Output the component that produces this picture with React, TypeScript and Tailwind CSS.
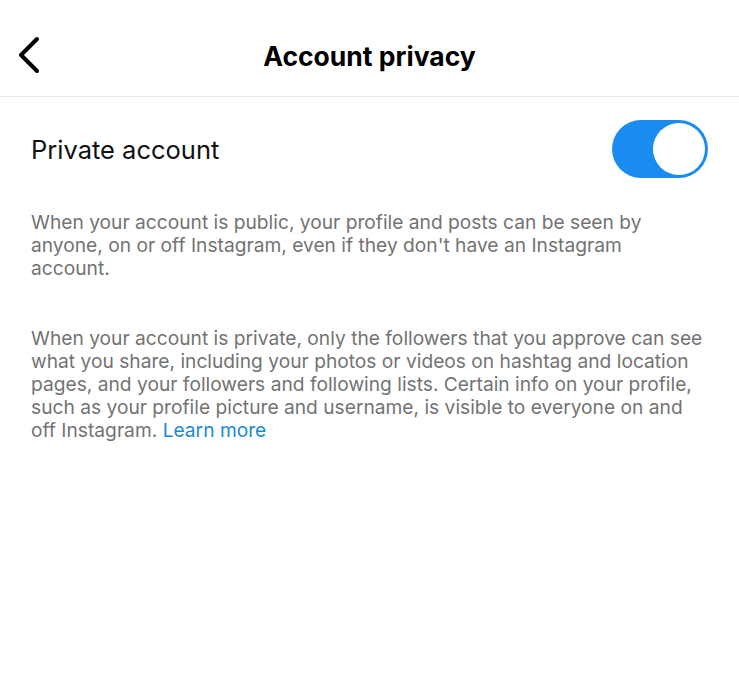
import React from "react";

export default function App() {
  return (
    <div className="w-[739px] h-[692px] bg-white" style={{ fontFamily: "Inter, 'Noto Sans', sans-serif" }}>
      <div className="relative h-[97px] flex items-center justify-center border-b border-[#e8e8e8]">
        <svg className="absolute left-[16px] top-[36px]" width="26" height="38" viewBox="0 0 26 38" fill="none">
          <path d="M21 3 L5 19 L21 35" stroke="#000" strokeWidth="4" strokeLinecap="round" strokeLinejoin="round" />
        </svg>
        <h1 className="text-[26.5px] font-bold text-black mt-[18px]">Account privacy</h1>
      </div>
      <div className="flex items-center justify-between pl-[31px] pr-[31px] pt-[23px]">
        <span className="text-[25.5px] text-[#111] mt-[3px]">Private account</span>
        <div className="w-[96px] h-[58px] rounded-full bg-[#1a8cf0] flex items-center justify-end pr-[3px]">
          <div className="w-[52px] h-[52px] rounded-full bg-white" />
        </div>
      </div>
      <div className="pl-[31px] pr-[34px] pt-[33px] text-[19.2px] leading-[23px] text-[#737373]">
        <p>
          When your account is public, your profile and posts can be seen by anyone, on or off Instagram, even if they don't have an Instagram account.
        </p>
        <p className="mt-[47px]">
          When your account is private, only the followers that you approve can see what you share, including your photos or videos on hashtag and location pages, and your followers and following lists. Certain info on your profile, such as your profile picture and username, is visible to everyone on and off Instagram.{" "}
          <span className="text-[#1a8ad4]">Learn more</span>
        </p>
      </div>
    </div>
  );
}
